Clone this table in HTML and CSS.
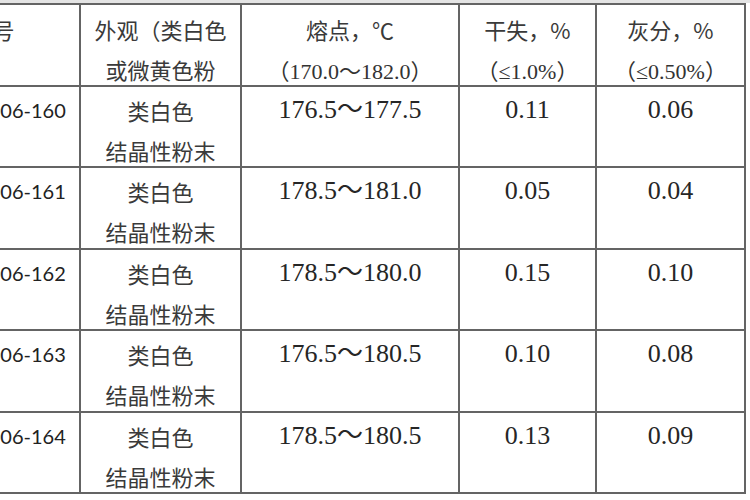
FILE: index.html
```html
<!DOCTYPE html>
<html lang="zh-CN">
<head>
<meta charset="utf-8">
<title>检测结果</title>
<link rel="stylesheet" href="styles.css">
</head>
<body>
<div class="page">
  <div class="top-strip"></div>
  <div class="grid">
    <div class="cell head id">批号</div>
    <div class="cell head cjk">外观（类白色<br>或微黄色粉</div>
    <div class="cell head cjk">熔点，℃<br><span class="num">（170.0～182.0）</span></div>
    <div class="cell head cjk">干失，%<br><span class="num">（≤1.0%）</span></div>
    <div class="cell head cjk">灰分，%<br><span class="num">（≤0.50%）</span></div>

    <div class="cell id">201903006-160</div>
    <div class="cell cjk">类白色<br>结晶性粉末</div>
    <div class="cell num">176.5～177.5</div>
    <div class="cell num">0.11</div>
    <div class="cell num">0.06</div>

    <div class="cell id">201903006-161</div>
    <div class="cell cjk">类白色<br>结晶性粉末</div>
    <div class="cell num">178.5～181.0</div>
    <div class="cell num">0.05</div>
    <div class="cell num">0.04</div>

    <div class="cell id">201903006-162</div>
    <div class="cell cjk">类白色<br>结晶性粉末</div>
    <div class="cell num">178.5～180.0</div>
    <div class="cell num">0.15</div>
    <div class="cell num">0.10</div>

    <div class="cell id">201903006-163</div>
    <div class="cell cjk">类白色<br>结晶性粉末</div>
    <div class="cell num">176.5～180.5</div>
    <div class="cell num">0.10</div>
    <div class="cell num">0.08</div>

    <div class="cell id">201903006-164</div>
    <div class="cell cjk">类白色<br>结晶性粉末</div>
    <div class="cell num">178.5～180.5</div>
    <div class="cell num">0.13</div>
    <div class="cell num">0.09</div>
  </div>
</div>
</body>
</html>
```

FILE: styles.css
```css
html, body {
  margin: 0;
  padding: 0;
  background: #ffffff;
}

.page {
  width: 750px;
  height: 500px;
  overflow: hidden;
  background: #ffffff;
}

.top-strip {
  height: 3px;
  background: #e4e4e4;
}

.grid {
  display: grid;
  grid-template-columns: 173px 159px 216px 135px 147px;
  grid-template-rows: 80px 79px 80px 79px 80px 79px;
  gap: 2px;
  padding: 2px;
  background: #646464;
  margin-left: -96px;
  width: max-content;
}

.cell {
  background: #ffffff;
  text-align: center;
  padding-top: 3px;
  line-height: 40px;
  overflow: hidden;
  white-space: nowrap;
  color: #2e2e2e;
}

.cell.head {
  padding-top: 4px;
}

.cjk {
  font-family: "Noto Sans CJK SC", sans-serif;
  font-size: 22px;
  color: #3a3a3a;
}

.num {
  font-family: "Liberation Serif", "Noto Sans CJK SC", serif;
  font-size: 26px;
  color: #262626;
}

.head .num {
  font-size: 22px;
  color: #333333;
}

.id {
  font-family: Lato, "Noto Sans CJK SC", sans-serif;
  font-size: 20px;
  color: #222222;
}

.head.id {
  font-family: "Noto Sans CJK SC", sans-serif;
  font-size: 22px;
  color: #3a3a3a;
}
```
